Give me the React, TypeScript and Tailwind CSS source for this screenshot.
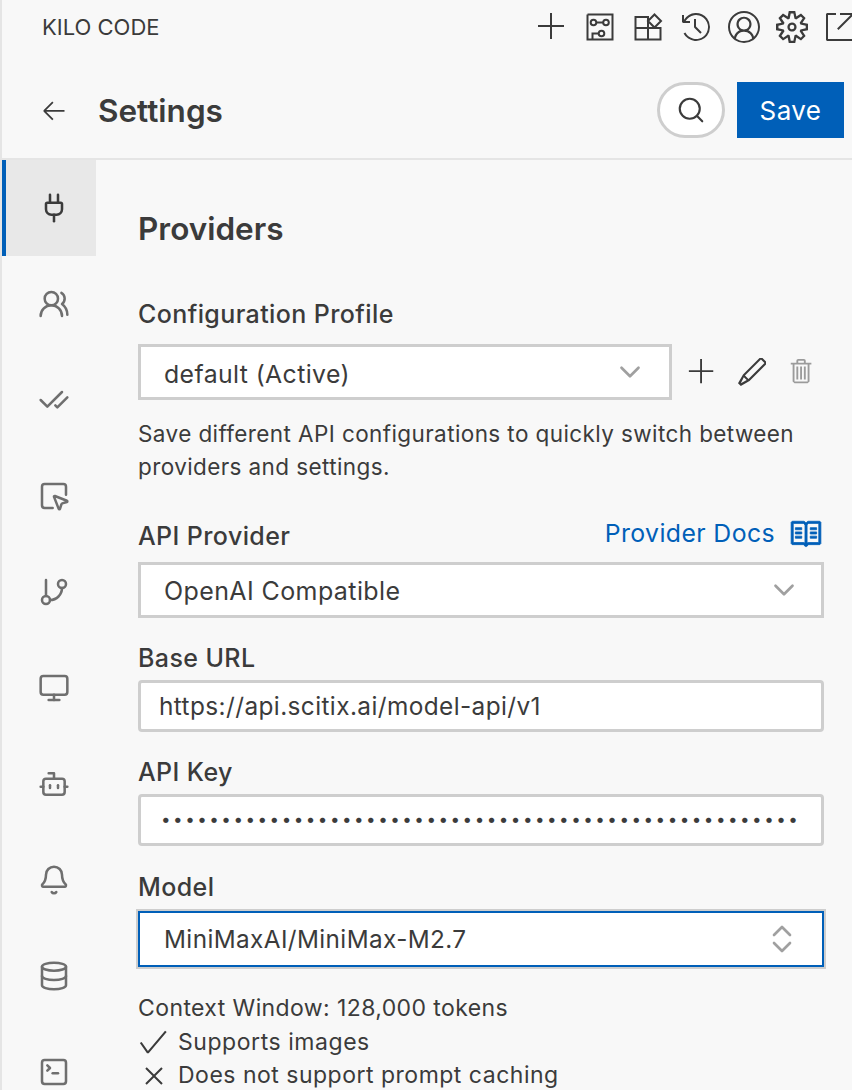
import {
  Bell,
  Bot,
  CheckCheck,
  ChevronDown,
  ChevronUp,
  Database,
  GitBranch,
  Monitor,
  Plug,
  Search,
  SquareMousePointer,
  SquareTerminal,
  UsersRound,
} from "lucide-react";
import {
  VscAccount,
  VscAdd,
  VscArrowLeft,
  VscBook,
  VscCheck,
  VscClose,
  VscEdit,
  VscHistory,
  VscLinkExternal,
  VscSettingsGear,
  VscTrash,
} from "react-icons/vsc";

const tabs = [
  UsersRound,
  CheckCheck,
  SquareMousePointer,
  GitBranch,
  Monitor,
  Bot,
  Bell,
  Database,
  SquareTerminal,
];

function ProcessIcon() {
  return (
    <svg width={32} height={32} viewBox="-2.5 -2.5 32 32" fill="none" stroke="currentColor" strokeWidth={2}>
      <path d="M1 1h25v25H6v-6h6M1 1v25h5" />
      <circle cx={7} cy={9} r={2.8} />
      <circle cx={19.5} cy={9} r={2.8} />
      <circle cx={15} cy={20} r={2.8} />
      <path d="M9.8 9h6.9" />
    </svg>
  );
}

function ExtensionsIcon() {
  return (
    <svg width={32} height={32} viewBox="-2.5 -2.5 32 32" fill="none" stroke="currentColor" strokeWidth={2}>
      <path d="M1 3.5h12.5V26H1zM1 14.5h25V26H13.5" />
      <path d="M20 1l6.5 6.5L20 14l-6.5-6.5z" />
    </svg>
  );
}

function Sidebar() {
  return (
    <nav className="w-[94px] shrink-0">
      <div className="h-[96px] flex items-center justify-center pl-[6px] bg-[#e8e8e8] border-l-4 border-[#005fb8]">
        <Plug size={32} strokeWidth={1.9} className="text-[#3b3b3b]" />
      </div>
      {tabs.map((Icon, i) => (
        <div key={i} className="h-[96px] flex items-center justify-center pl-[10px]">
          <Icon size={32} strokeWidth={1.9} className="text-[#6f6f6f]" />
        </div>
      ))}
    </nav>
  );
}

function Label({ children, className = "" }: { children: React.ReactNode; className?: string }) {
  return <div className={`text-[25px] leading-[32px] font-medium tracking-[0.4px] ${className}`}>{children}</div>;
}

export default function App() {
  return (
    <div
      className="w-[852px] h-[1090px] overflow-hidden bg-[#f8f8f8] border-l-2 border-[#e5e5e5] text-[#3b3b3b] tracking-[0.4px]"
      style={{ fontFamily: "Inter, 'Liberation Sans', sans-serif" }}
    >
      <header className="h-[54px] flex items-center pl-[40px]">
        <span className="text-[22px] font-normal tracking-normal">KILO CODE</span>
        <div className="ml-auto flex items-center gap-[16px] -mr-[4px] text-[#3b3b3b]">
          <VscAdd size={32} />
          <ProcessIcon />
          <ExtensionsIcon />
          <VscHistory size={32} />
          <VscAccount size={32} />
          <VscSettingsGear size={32} />
          <VscLinkExternal size={32} />
        </div>
      </header>
      <div className="h-[106px] flex items-center pt-[8px] pl-[38px] pr-[8px] border-b-2 border-[#e5e5e5]">
        <VscArrowLeft size={28} />
        <h1 className="ml-[30px] mt-[2px] text-[31.5px] font-semibold tracking-normal">Settings</h1>
        <button className="ml-auto w-[68px] h-[56px] rounded-[28px] bg-white border-[3px] border-[#cecece] flex items-center justify-center">
          <Search size={30} strokeWidth={1.7} />
        </button>
        <button className="ml-[12px] w-[107px] h-[56px] bg-[#005fb8] text-white text-[26px] font-normal">
          Save
        </button>
      </div>
      <div className="flex">
        <Sidebar />
        <main className="pl-[42px] w-[728px]">
          <h2 className="mt-[49px] text-[31.5px] leading-[40px] font-semibold tracking-normal">Providers</h2>
          <Label className="mt-[49px]">Configuration Profile</Label>
          <div className="mt-[14px] flex items-center">
            <div className="w-[534px] h-[56px] bg-white border-[3px] border-[#cecece] flex items-center justify-between pl-[23px] pr-[22px] text-[24.8px]">
              <span className="pt-[6px]">default (Active)</span>
              <ChevronDown size={34} strokeWidth={1.9} className="text-[#a0a0a0]" />
            </div>
            <VscAdd size={30} className="ml-[15px]" />
            <VscEdit size={32} className="ml-[19px]" />
            <VscTrash size={30} className="ml-[19px] text-[#9b9b9b]" />
          </div>
          <p className="mt-[17px] text-[22.5px] leading-[33px] w-[680px]">
            Save different API configurations to quickly switch between providers and settings.
          </p>
          <div className="mt-[36px] flex items-center justify-between w-[685px]">
            <Label>API Provider</Label>
            <div className="flex items-center text-[#005fb8] text-[24.8px] -mt-1">
              Provider Docs
              <VscBook size={34} stroke="currentColor" strokeWidth={0.35} className="ml-[14px]" />
            </div>
          </div>
          <div className="mt-[10px] w-[686px] h-[56px] bg-white border-[3px] border-[#cecece] flex items-center justify-between pl-[23px] pr-[20px] text-[25px]">
            <span className="pt-[3px]">OpenAI Compatible</span>
            <ChevronDown size={34} strokeWidth={1.9} className="text-[#a0a0a0]" />
          </div>
          <Label className="mt-[24px]">Base URL</Label>
          <div className="mt-[6px] w-[686px] h-[52px] bg-white border-[3px] border-[#cecece] rounded-[4px] flex items-center pl-[18px] pt-[1px] text-[24.4px]">
            https://api.scitix.ai/model-api/v1
          </div>
          <Label className="mt-[24px]">API Key</Label>
          <div className="mt-[6px] w-[686px] h-[52px] bg-white border-[3px] border-[#cecece] rounded-[4px] flex items-center pl-[20px] pr-[16px]">
            <span className="block whitespace-nowrap text-[17px] tracking-[2.5px]">{"•".repeat(53)}</span>
          </div>
          <Label className="mt-[25px]">Model</Label>
          <div className="mt-[8px] w-[686px] h-[56px] bg-white border-2 border-[#005fb8] outline-2 outline-[#cecece] flex items-center justify-between pl-[24px] pr-[24px] text-[24.3px]">
            MiniMaxAI/MiniMax-M2.7
            <span className="flex flex-col text-[#a0a0a0]">
              <ChevronUp size={32} strokeWidth={2} className="-mb-[16px]" />
              <ChevronDown size={32} strokeWidth={2} />
            </span>
          </div>
          <div className="mt-[25px] text-[23px] leading-[33.5px] tracking-[0.4px] whitespace-nowrap">
            <div>Context Window: 128,000 tokens</div>
            <div className="flex items-center tracking-[0.55px]">
              <VscCheck size={34} className="-ml-[2px] mr-[8px] -my-[2px]" />
              Supports images
            </div>
            <div className="flex items-center tracking-[0.5px]">
              <VscClose size={32} className="mr-[8px] -my-[2px]" />
              Does not support prompt caching
            </div>
          </div>
        </main>
      </div>
    </div>
  );
}
